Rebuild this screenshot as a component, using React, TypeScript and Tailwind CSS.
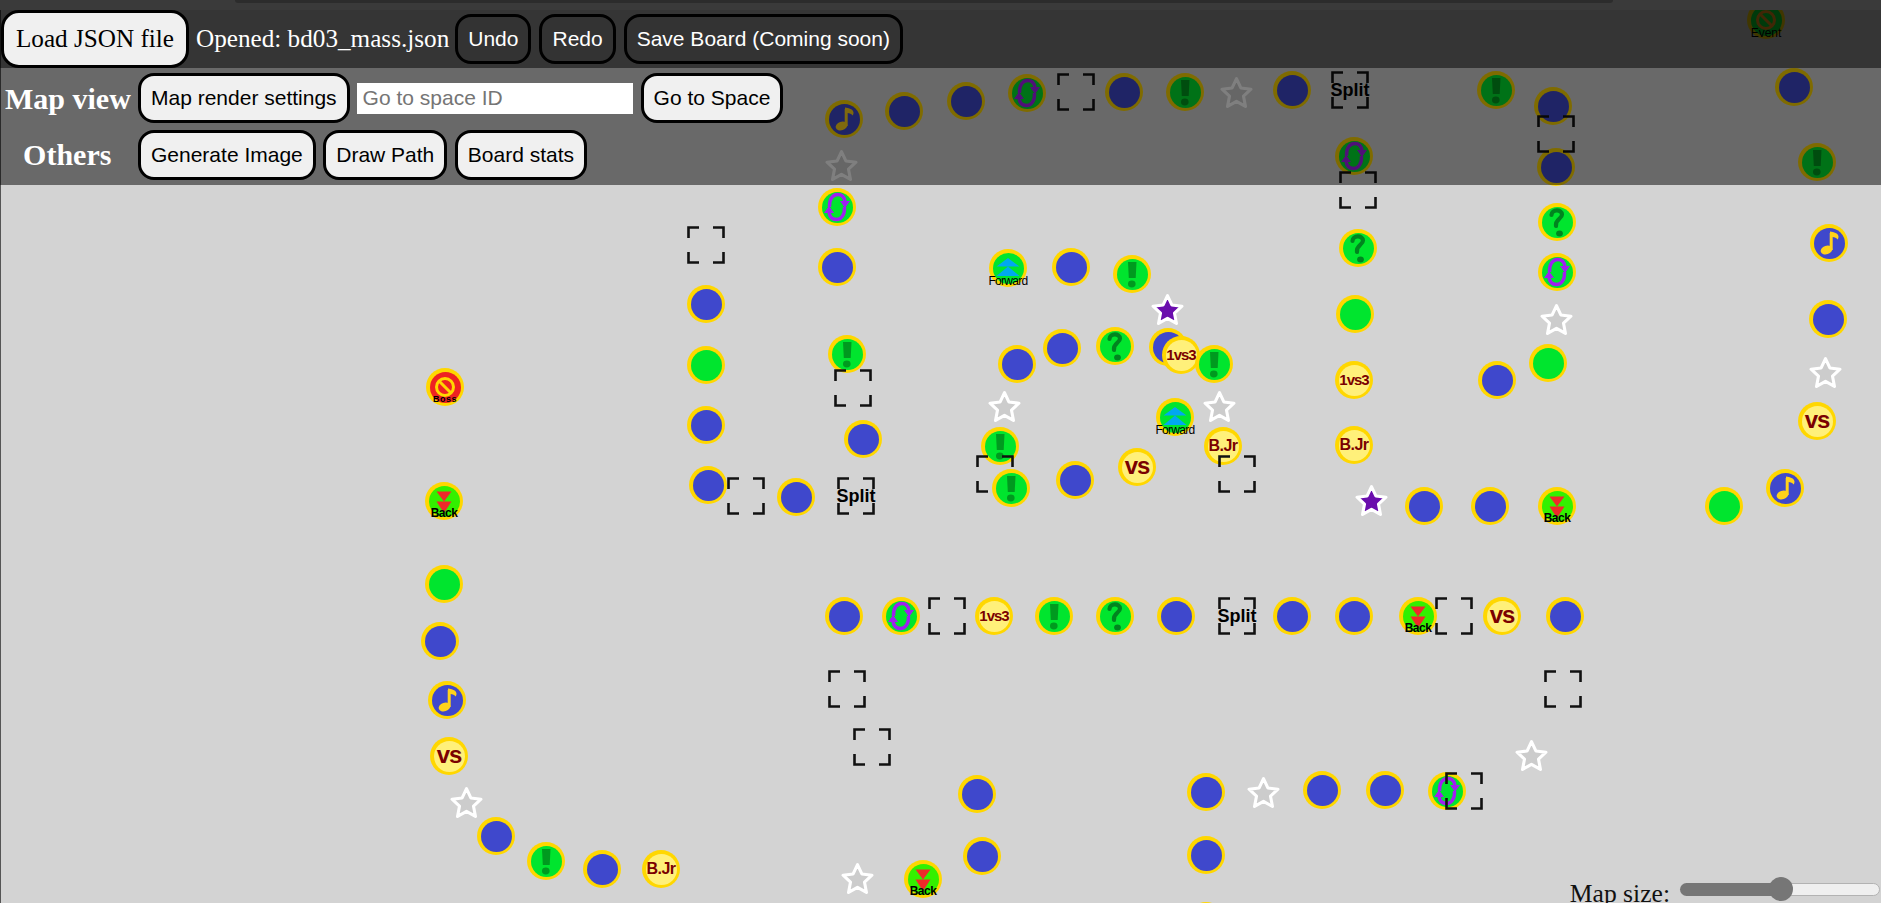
import React from "react";

type Kind =
  | "blue"
  | "green"
  | "excl"
  | "quest"
  | "swap"
  | "music"
  | "forward"
  | "back"
  | "boss"
  | "event"
  | "vs"
  | "1vs3"
  | "bjr"
  | "star"
  | "pstar"
  | "empty"
  | "split";

// [kind, center x, center y] in page pixels
const SPACES: [Kind, number, number][] = [
  ["music", 844, 119],
  ["blue", 904, 111],
  ["blue", 966, 101],
  ["swap", 1027, 93],
  ["empty", 1076, 92],
  ["blue", 1124, 92],
  ["excl", 1185, 92],
  ["star", 1236, 92],
  ["blue", 1292, 90],
  ["split", 1350, 90],
  ["excl", 1496, 90],
  ["blue", 1553, 106],
  ["blue", 1556, 167],
  ["empty", 1556, 134],
  ["event", 1766, 20],
  ["blue", 1794, 87],
  ["excl", 1817, 162],
  ["swap", 1354, 156],
  ["empty", 1358, 190],
  ["star", 841, 165],
  ["swap", 837, 207],
  ["empty", 706, 245],
  ["blue", 837, 267],
  ["blue", 706, 304],
  ["green", 706, 365],
  ["blue", 706, 425],
  ["blue", 708, 485],
  ["empty", 746, 496],
  ["blue", 796, 497],
  ["split", 856, 496],
  ["excl", 847, 354],
  ["empty", 853, 388],
  ["blue", 863, 439],
  ["forward", 1008, 268],
  ["blue", 1071, 267],
  ["excl", 1132, 274],
  ["pstar", 1167, 309],
  ["blue", 1017, 364],
  ["blue", 1062, 348],
  ["quest", 1115, 346],
  ["blue", 1168, 347],
  ["1vs3", 1181, 355],
  ["excl", 1214, 364],
  ["star", 1004, 406],
  ["star", 1219, 406],
  ["forward", 1175, 417],
  ["excl", 1000, 446],
  ["empty", 995, 474],
  ["excl", 1011, 488],
  ["blue", 1075, 480],
  ["vs", 1137, 467],
  ["bjr", 1223, 446],
  ["empty", 1237, 474],
  ["quest", 1358, 248],
  ["green", 1355, 314],
  ["1vs3", 1354, 380],
  ["bjr", 1354, 445],
  ["pstar", 1371, 500],
  ["blue", 1424, 506],
  ["blue", 1490, 506],
  ["back", 1557, 506],
  ["quest", 1557, 222],
  ["swap", 1557, 272],
  ["star", 1556, 319],
  ["green", 1548, 363],
  ["blue", 1497, 380],
  ["music", 1829, 243],
  ["blue", 1828, 319],
  ["star", 1825, 372],
  ["vs", 1817, 421],
  ["music", 1785, 488],
  ["green", 1724, 506],
  ["boss", 445, 387],
  ["back", 444, 501],
  ["green", 444, 584],
  ["blue", 440, 641],
  ["music", 447, 700],
  ["vs", 449, 756],
  ["star", 466, 802],
  ["blue", 496, 836],
  ["excl", 546, 861],
  ["blue", 602, 869],
  ["bjr", 661, 869],
  ["blue", 844, 616],
  ["swap", 901, 616],
  ["empty", 947, 616],
  ["1vs3", 994, 616],
  ["excl", 1054, 616],
  ["quest", 1115, 616],
  ["blue", 1176, 616],
  ["split", 1237, 616],
  ["blue", 1292, 616],
  ["blue", 1354, 616],
  ["back", 1418, 616],
  ["empty", 1454, 616],
  ["vs", 1502, 616],
  ["blue", 1565, 616],
  ["empty", 847, 689],
  ["empty", 872, 747],
  ["empty", 1563, 689],
  ["blue", 977, 794],
  ["blue", 982, 856],
  ["star", 857, 878],
  ["back", 923, 879],
  ["blue", 1206, 792],
  ["blue", 1206, 855],
  ["blue", 1206, 921],
  ["star", 1263, 792],
  ["blue", 1322, 790],
  ["blue", 1385, 790],
  ["swap", 1447, 791],
  ["empty", 1464, 791],
  ["star", 1531, 755],
];

const Star = ({ fill, opaque }: { fill: string; opaque?: boolean }) => (
  <svg viewBox="0 0 32 32" className="w-[33px] h-[33px]">
    <polygon
      points="16,2.5 20.2,11.6 30,12.8 22.8,19.6 24.7,29.5 16,24.6 7.3,29.5 9.2,19.6 2,12.8 11.8,11.6"
      fill={fill}
      fillOpacity={opaque ? 1 : 0.6}
      stroke="#ffffff"
      strokeWidth="3"
      strokeLinejoin="round"
    />
  </svg>
);

const Brackets = () => (
  <svg viewBox="0 0 38 38" className="absolute inset-0 w-[38px] h-[38px]">
    <path
      d="M1.5 12V1.5H12M26 1.5H36.5V12M1.5 26V36.5H12M26 36.5H36.5V26"
      fill="none"
      stroke="#111111"
      strokeWidth="2.6"
    />
  </svg>
);

const Caption = ({ text, className }: { text: string; className: string }) => (
  <span
    className={`absolute left-1/2 -translate-x-1/2 font-['Liberation_Sans',sans-serif] text-black whitespace-nowrap ${className}`}
  >
    {text}
  </span>
);

const Glyph = ({ kind }: { kind: Kind }) => {
  if (kind === "excl")
    return (
      <svg viewBox="0 0 38 38" className="absolute inset-0">
        <path d="M15 7h8.500l-.8 16h-6.900z" fill="#009a1f" />
        <ellipse cx="18.800" cy="29" rx="3.800" ry="3.400" fill="#009a1f" />
      </svg>
    );
  if (kind === "quest")
    return (
      <svg viewBox="0 0 38 38" className="absolute inset-0">
        <path
          d="M13.500 12C13.500 6 24 6 24 11.500C24 16 17 16 18 23"
          fill="none"
          stroke="#00851f"
          strokeWidth="4.200"
          strokeLinecap="round"
        />
        <ellipse cx="21.500" cy="30.500" rx="3.400" ry="3" fill="#00851f" />
      </svg>
    );
  if (kind === "swap")
    return (
      <svg viewBox="0 0 38 38" className="absolute inset-0">
        <path
          d="M11.500 19C11 11 15 6.500 19.500 6.500C24 6.500 26.500 9 27 14M26.500 19C27 27 23 31.500 18.500 31.500C14 31.500 11.500 29 11 24"
          fill="none"
          stroke="#a020f0"
          strokeWidth="3.400"
        />
        <path d="M22 13h10l-5 7zM6 25h10l-5-7z" fill="#a020f0" />
      </svg>
    );
  if (kind === "music")
    return (
      <svg viewBox="0 0 38 38" className="absolute inset-0">
        <path d="M21.200 9v17" stroke="#ffd21a" strokeWidth="3" />
        <path d="M20 7.500C24 8 28 9 28.500 12.500C28.500 14 28 15 27.500 15.500C26.500 13.500 24 13 20 13z" fill="#ffd21a" />
        <ellipse cx="16.500" cy="26" rx="6" ry="4.200" transform="rotate(-18 16.500 26)" fill="#ffd21a" />
      </svg>
    );
  if (kind === "forward")
    return (
      <>
        <svg viewBox="0 0 38 38" className="absolute inset-0">
          <path d="M19 9l11.500 8.500h-23zM19 17.500l11.500 9.500h-23z" fill="#00a8f0" />
        </svg>
        <Caption text="Forward" className="top-[26px] text-[12px] leading-[12px] tracking-[-0.7px]" />
      </>
    );
  if (kind === "back")
    return (
      <>
        <svg viewBox="0 0 38 38" className="absolute inset-0">
          <path d="M11.500 9.500h15L19 19.500zM11.500 19.500h15L19 31z" fill="#ee2a2a" />
        </svg>
        <Caption text="Back" className="top-[25px] text-[12px] leading-[13px] font-bold tracking-[-0.5px]" />
      </>
    );
  if (kind === "boss" || kind === "event") {
    const c = kind === "boss" ? "#ffd700" : "#ff9a1a";
    return (
      <>
        <svg viewBox="0 0 38 38" className="absolute inset-0">
          <circle cx="19" cy="19" r="8.500" fill="none" stroke={c} strokeWidth="3" />
          <path d="M13 13l12 12" stroke={c} strokeWidth="3" />
        </svg>
        {kind === "boss" ? (
          <Caption text="Boss" className="top-[27px] text-[9px] leading-[9px] font-bold tracking-[0.5px]" />
        ) : (
          <Caption text="Event" className="top-[26px] text-[12px] leading-[12px]" />
        )}
      </>
    );
  }
  return null;
};

const CIRCLE_BG: Partial<Record<Kind, string>> = {
  blue: "bg-[#3f48cc]",
  music: "bg-[#3f48cc]",
  green: "bg-[#00e52e]",
  excl: "bg-[#00e52e]",
  quest: "bg-[#00e52e]",
  swap: "bg-[#00e52e]",
  forward: "bg-[#00e52e]",
  back: "bg-[#33f000]",
  event: "bg-[#00e52e]",
  boss: "bg-[#ee2222]",
  vs: "bg-[#fff07a]",
  "1vs3": "bg-[#fff07a]",
  bjr: "bg-[#fff07a]",
};

const BADGE_TEXT: Partial<Record<Kind, string>> = {
  vs: "vs",
  "1vs3": "1vs3",
  bjr: "B.Jr",
};

const Space = ({ kind, x, y }: { kind: Kind; x: number; y: number }) => {
  const pos = { left: x - 19, top: y - 19 };
  if (kind === "star" || kind === "pstar")
    return (
      <div className="absolute w-[38px] h-[38px] flex items-center justify-center" style={pos}>
        {kind === "star" ? <Star fill="#c8c8c8" /> : <Star fill="#6a0dad" opaque />}
      </div>
    );
  if (kind === "empty" || kind === "split")
    return (
      <div className="absolute w-[38px] h-[38px] flex items-center justify-center" style={pos}>
        <Brackets />
        {kind === "split" && (
          <span className="font-['Liberation_Sans',sans-serif] font-bold text-[18px] text-black">
            Split
          </span>
        )}
      </div>
    );
  return (
    <div className="absolute w-[38px] h-[38px] rounded-full bg-[#ffd700]" style={pos}>
      <div className={`absolute inset-[3.5px] rounded-full ${CIRCLE_BG[kind]}`} />
      <Glyph kind={kind} />
      {BADGE_TEXT[kind] && (
        <span
          className={`absolute inset-0 flex items-center justify-center font-['Liberation_Sans',sans-serif] font-bold text-[#7a0000] ${
            kind === "vs"
              ? "text-[24px] tracking-[-1px] pb-[2px]"
              : kind === "bjr"
                ? "text-[16px] tracking-[-0.5px]"
                : "text-[15px] tracking-[-1px]"
          }`}
        >
          {BADGE_TEXT[kind]}
        </span>
      )}
    </div>
  );
};

const lightBtn =
  "h-[50px] px-[10px] rounded-[16px] border-[3px] border-black bg-[#f0f0f0] text-black text-[21px] font-['Liberation_Sans',sans-serif] whitespace-nowrap";
const darkBtn =
  "h-[50px] px-[10px] rounded-[16px] border-[3px] border-black bg-[#333333] text-white text-[21px] font-['Liberation_Sans',sans-serif] whitespace-nowrap";

export default function App() {
  return (
    <div className="relative w-[1881px] h-[903px] overflow-hidden bg-[#3a3a3a] font-['Liberation_Serif',serif]">
      {/* browser tab strip */}
      <div className="h-[10px]">
        <div className="ml-[235px] w-[1378px] h-[3px] bg-[#2c2c2c] rounded-b-[6px]" />
      </div>

      <div className="absolute left-0 right-0 top-[10px] bottom-0 bg-[#d3d3d3] border-l border-[#555555] overflow-hidden">
        <div className="absolute -top-[10px] -left-px w-[1881px] h-[903px]">
          {SPACES.map(([kind, x, y], i) => (
            <Space key={i} kind={kind} x={x} y={y} />
          ))}
        </div>
      </div>

      {/* toolbars over the map */}
      <div className="absolute left-0 right-0 top-[10px]">
        <div className="h-[58px] bg-[#000000bf] flex items-center gap-[8px] pl-[1px]">
          <button className="h-[58px] w-[188px] rounded-[18px] border-[3px] border-black bg-[#f0f0f0] text-black text-[25.2px]">
            Load JSON file
          </button>
          <span className="-ml-[1px] -mr-[2px] text-white text-[25.2px] whitespace-nowrap">Opened: bd03_mass.json</span>
          <button className={darkBtn}>Undo</button>
          <button className={darkBtn}>Redo</button>
          <button className={darkBtn}>Save Board (Coming soon)</button>
        </div>
        <div className="h-[117px] bg-[#00000080] flex flex-col gap-[7px] pt-[5px]">
          <div className="flex items-center h-[50px]">
            <span className="w-[138px] pl-[5px] text-white font-bold text-[30px] whitespace-nowrap">Map view</span>
            <button className={lightBtn}>Map render settings</button>
            <input
              placeholder="Go to space ID"
              className="ml-[7px] w-[276px] h-[31px] bg-white px-[6px] text-[21px] font-['Liberation_Sans',sans-serif] placeholder:text-[#757575] outline-none"
            />
            <button className={`${lightBtn} ml-[8px]`}>Go to Space</button>
          </div>
          <div className="flex items-center h-[50px] gap-[7.5px]">
            <span className="w-[130.5px] pl-[4px] pb-[2px] text-center text-white font-bold text-[30px]">Others</span>
            <button className={lightBtn}>Generate Image</button>
            <button className={lightBtn}>Draw Path</button>
            <button className={lightBtn}>Board stats</button>
          </div>
        </div>
      </div>

      {/* map size control */}
      <div className="absolute right-[1px] top-[880px] flex items-start gap-[10px]">
        <span className="mt-[1px] text-[#111111] text-[25.6px] leading-[25px] whitespace-nowrap">Map size:</span>
        <div className="relative w-[200px] h-[13px] mt-[3px] flex rounded-full overflow-visible">
          <div className="w-[101px] bg-[#767676] rounded-l-full" />
          <div className="flex-1 bg-[#efefef] border border-[#b2b2b2] rounded-r-full" />
          <div className="absolute left-[89px] -top-[6px] w-[24px] h-[24px] rounded-full bg-[#767676]" />
        </div>
      </div>
    </div>
  );
}
